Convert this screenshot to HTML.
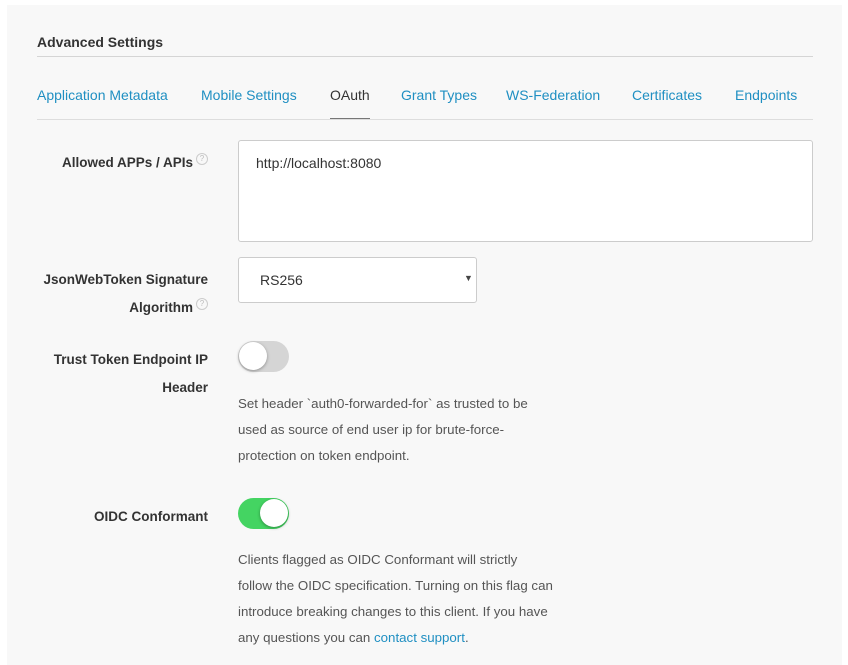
<!DOCTYPE html>
<html><head><style>
body{margin:0;background:#fff;width:848px;height:654px;overflow:hidden;font-family:"Liberation Sans",sans-serif;}
.panel{position:absolute;left:7px;top:5px;width:835px;height:660px;background:#f8f8f8;}
.a{position:absolute;white-space:nowrap;}
.lbl{position:absolute;right:640px;text-align:right;font-weight:bold;font-size:13.5px;color:#333;line-height:28px;}
.q{display:inline-block;width:10px;height:10px;border:1px solid #ccc;border-radius:50%;font-size:8px;line-height:10px;text-align:center;color:#bbb;font-weight:normal;vertical-align:6px;margin-left:3px}
.tab{position:absolute;top:87px;font-size:14px;color:#1f8fc2;}
.help{position:absolute;left:238px;font-size:13.3px;color:#555;line-height:26px;width:315px;}
</style></head><body>
<div class="panel"></div>
<div class="a" style="left:37px;top:34px;font-size:14px;font-weight:bold;color:#333">Advanced Settings</div>
<div class="a" style="left:37px;top:56px;width:776px;height:1px;background:#d5d5d5"></div>
<div class="tab" style="left:37px">Application Metadata</div>
<div class="tab" style="left:201px">Mobile Settings</div>
<div class="tab" style="left:330px;color:#333">OAuth</div>
<div class="a" style="left:330px;top:118px;width:40px;height:1px;background:#777"></div>
<div class="tab" style="left:401px">Grant Types</div>
<div class="tab" style="left:506px">WS-Federation</div>
<div class="tab" style="left:632px">Certificates</div>
<div class="tab" style="left:735px">Endpoints</div>
<div class="a" style="left:37px;top:119px;width:776px;height:1px;background:#ddd"></div>

<div class="lbl" style="top:149px">Allowed APPs / APIs<span class="q">?</span></div>
<div class="a" style="left:238px;top:140px;width:573px;height:100px;background:#fff;border:1px solid #ccc;border-radius:3px"></div>
<div class="a" style="left:256px;top:155px;font-size:14px;color:#333">http://localhost:8080</div>

<div class="lbl" style="top:266px;line-height:28px">JsonWebToken Signature<br>Algorithm<span class="q">?</span></div>
<div class="a" style="left:238px;top:257px;width:237px;height:44px;background:#fff;border:1px solid #ccc;border-radius:3px"></div>
<div class="a" style="left:260px;top:272px;font-size:14px;color:#333">RS256</div>
<div class="a" style="left:464px;top:273px;font-size:9px;color:#444">▼</div>

<div class="lbl" style="top:346px">Trust Token Endpoint IP<br>Header</div>
<div class="a" style="left:238px;top:341px;width:51px;height:31px;border-radius:16px;background:#d5d5d5"></div>
<div class="a" style="left:239px;top:342px;width:28px;height:28px;border-radius:50%;background:#fff;box-shadow:0 1px 3px rgba(0,0,0,.35)"></div>
<div class="help" style="top:391px">Set header `auth0-forwarded-for` as trusted to be used as source of end user ip for brute-force-protection on token endpoint.</div>

<div class="lbl" style="top:503px">OIDC Conformant</div>
<div class="a" style="left:238px;top:498px;width:51px;height:31px;border-radius:16px;background:#44d462"></div>
<div class="a" style="left:260px;top:499px;width:28px;height:28px;border-radius:50%;background:#fff;box-shadow:0 1px 3px rgba(0,0,0,.35)"></div>
<div class="help" style="top:547px">Clients flagged as OIDC Conformant will strictly follow the OIDC specification. Turning on this flag can introduce breaking changes to this client. If you have any questions you can <span style="color:#1f8fc2">contact support</span>.</div>
</body></html>
